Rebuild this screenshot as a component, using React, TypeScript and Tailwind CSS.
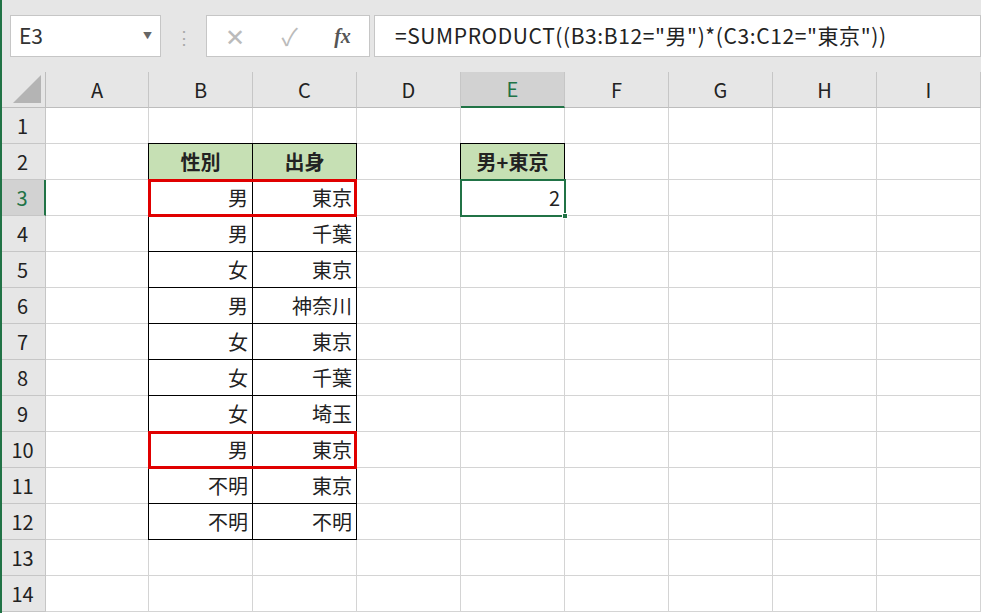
import React from "react";

const cols = ["A","B","C","D","E","F","G","H","I"];
const widths = [103,104,104,104,104,104,104,104,104];
const data: [string,string][] = [["男","東京"],["男","千葉"],["女","東京"],["男","神奈川"],["女","東京"],["女","千葉"],["女","埼玉"],["男","東京"],["不明","東京"],["不明","不明"]];
const font = { fontFamily: '"Noto Sans CJK JP","Noto Sans",sans-serif' };

export default function App() {
  const left = (i: number) => 46 + widths.slice(0, i).reduce((a, b) => a + b, 0);
  return (
    <div className="w-[981px] h-[613px] overflow-hidden bg-white relative" style={font}>
      <div className="absolute left-0 top-0 w-[2px] h-full bg-[#217346] z-20" />
      <div className="h-[72px] bg-[#e6e6e6] flex items-center pl-[10px] gap-0">
        <div className="w-[151px] h-[42px] bg-white border border-[#c6c6c6] flex items-center px-2 text-[21px] text-[#333]">
          <span className="flex-1">E3</span><span className="text-[9px] text-[#666]">▼</span>
        </div>
        <div className="w-[45px] flex justify-center text-[#aaa] text-[18px]">⋮</div>
        <div className="w-[164px] h-[42px] bg-white border border-[#c6c6c6] flex items-center justify-around text-[#bbb] text-[24px]">
          <span>✕</span><span>✓</span><span className="text-[#555] italic font-bold text-[20px]" style={{fontFamily:'"Liberation Serif",serif'}}>fx</span>
        </div>
        <div className="ml-[4px] flex-1 h-[42px] bg-white border border-[#c6c6c6] flex items-center pl-[20px] text-[21px] tracking-[0.6px] text-[#222]">=SUMPRODUCT((B3:B12="男")*(C3:C12="東京"))</div>
      </div>
      <div className="relative">
        <div className="grid grid-cols-[46px_103px_104px_104px_104px_104px_104px_104px_104px_104px] auto-rows-[36px]">
          <div className="bg-[#e6e6e6] border-r border-b border-[#bdbdbd] relative">
            <div className="absolute right-[4px] bottom-[4px] w-0 h-0 border-l-[28px] border-l-transparent border-b-[28px] border-b-[#b4b4b4]" />
          </div>
          {cols.map(c => (
            <div key={c} className={`flex items-center justify-center text-[20px] border-r border-b ${c === "E" ? "bg-[#d2d2d2] border-b-[#217346] border-b-2 text-[#217346]" : "bg-[#e6e6e6] border-b-[#bdbdbd] text-[#222]"} border-r-[#c6c6c6]`}>{c}</div>
          ))}
          {Array.from({ length: 14 }, (_, r) => {
            const row = r + 1;
            return (
              <React.Fragment key={row}>
                <div className={`flex items-center justify-center text-[20px] border-r border-b border-[#c6c6c6] ${row === 3 ? "bg-[#d2d2d2] text-[#217346] border-r-2 border-r-[#217346]" : "bg-[#e6e6e6] text-[#222]"}`}>{row}</div>
                {cols.map((c) => {
                  let content = "";
                  let cls = "border-r border-b border-[#d4d4d4]";
                  if ((c === "B" || c === "C") && row === 2) { content = c === "B" ? "性別" : "出身"; cls = "bg-[#c6e0b4] border-r border-b border-black font-bold justify-center"; }
                  else if ((c === "B" || c === "C") && row >= 3 && row <= 12) { content = data[row - 3][c === "B" ? 0 : 1]; cls = "border-r border-b border-black justify-end"; }
                  else if (c === "E" && row === 2) { content = "男+東京"; cls = "bg-[#c6e0b4] border-r border-b border-black font-bold justify-center"; }
                  else if (c === "E" && row === 3) { content = "2"; cls = "border-r border-b border-[#d4d4d4] justify-end"; }
                  const extra = (c === "B" && row >= 2 && row <= 12) ? " border-l border-l-black -ml-px" : "";
                  const top = ((c === "B" || c === "C" || c === "E") && row === 2) ? " border-t border-t-black -mt-px" : "";
                  const eextra = (c === "E" && row === 2) ? " border-l border-l-black -ml-px" : "";
                  return <div key={c} className={`flex items-center px-[4px] text-[20px] text-[#222] ${cls}${extra}${top}${eextra}`}>{content}</div>;
                })}
              </React.Fragment>
            );
          })}
        </div>
        {[3, 10].map(r => (
          <div key={r} className="absolute border-[3px] border-[#e00000] pointer-events-none" style={{ left: left(1) - 1, top: 36 * r - 1, width: 209, height: 38 }} />
        ))}
        <div className="absolute border-2 border-[#217346]" style={{ left: left(4) - 1, top: 36 * 3 - 1, width: 106, height: 38 }}>
          <div className="absolute right-[-4px] bottom-[-4px] w-[6px] h-[6px] bg-[#217346] border border-white" />
        </div>
      </div>
    </div>
  );
}
